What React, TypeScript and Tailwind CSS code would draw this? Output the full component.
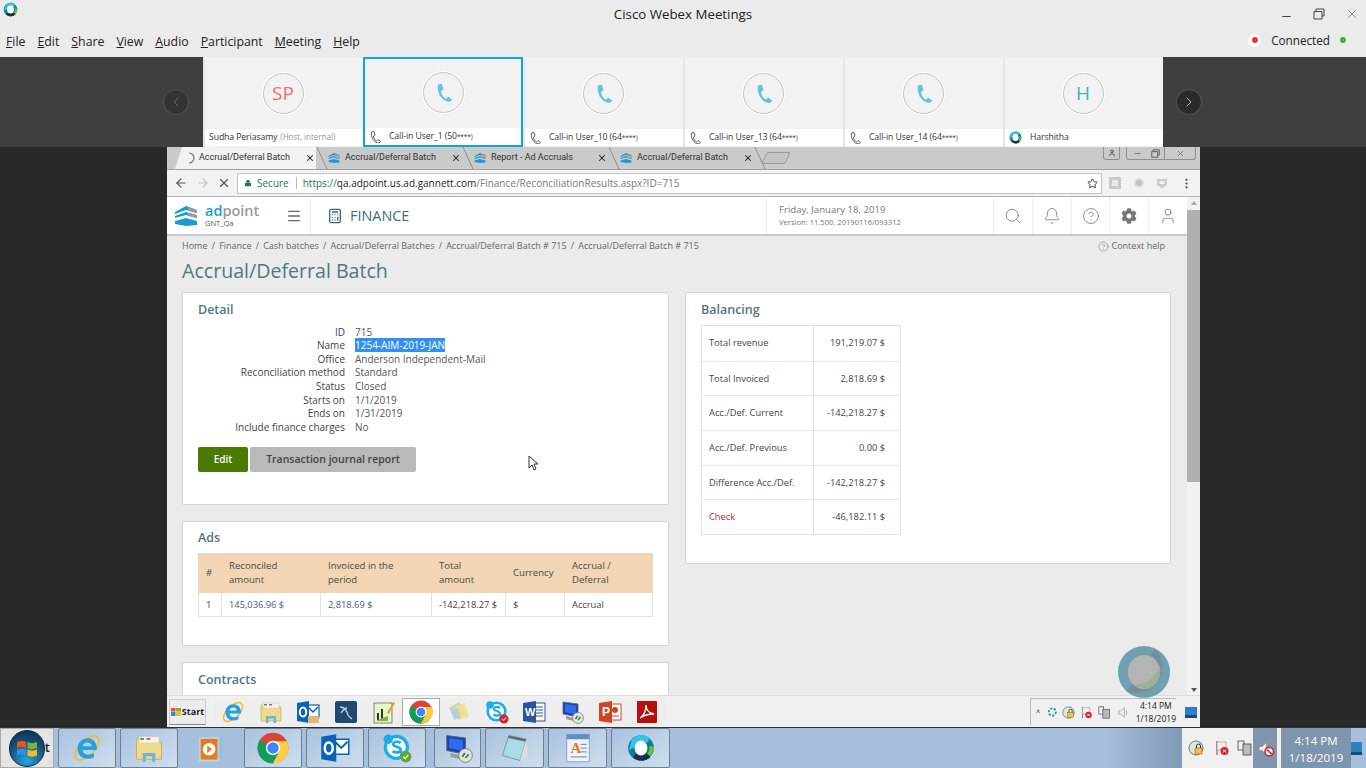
import React from 'react';
import { ArrowLeft, ArrowRight, Bell, Calculator, ChevronLeft, ChevronRight, CircleHelp, EllipsisVertical, Lock, Menu, Minus, Search, Star, User, X } from 'lucide-react';
import { FaCog } from 'react-icons/fa';

const handset = 'M5 2 10 1l2 7-3 2c0 4 3 8 6 10l3-3 5 4-3 3C10 24 3 12 5 2z';

const PhoneGlyph: React.FC<{ size?: number; outline?: boolean }> = ({ size = 18, outline }) => (
    <svg width={size} height={size} viewBox="0 0 24 24" className="shrink-0">
        <path d={handset} fill={outline ? 'none' : '#62c0ec'} stroke={outline ? '#333' : 'none'} strokeWidth={outline ? 1.6 : 0} />
    </svg>
);

const WebexLogo: React.FC<{ size?: number }> = ({ size = 16 }) => (
    <svg width={size} height={size} viewBox="0 0 24 24">
        <circle cx="12" cy="12" r="11" fill="#0a7d9c" />
        <path d="M4 5a11 11 0 0 1 15-2l-1 5a7 7 0 0 0-11 3L1.500 14z" fill="#35c3e8" />
        <path d="M5 20a11 11 0 0 0 15 0l-3-4a7 7 0 0 1-9 0z" fill="#14344a" />
        <path d="M20 19a11 11 0 0 0 3-8l-4-1a7 7 0 0 1-2 7z" fill="#76bd3a" />
        <ellipse cx="12" cy="12" rx="5.500" ry="6.500" fill="#fff" />
    </svg>
);

const AdpointLogo: React.FC<{ size?: number }> = ({ size = 16 }) => (
    <svg width={size} height={size} viewBox="0 0 24 24">
        <path d="M1 8 12 2l11 4v3L12 6 1 10z" fill="#1d9ad6" />
        <path d="M1 12 12 8l11 3v3l-11-3-11 3z" fill="#1d9ad6" />
        <path d="M1 17l11-3 11 3v4l-11 1-11-2z" fill="#1d9ad6" />
        <path d="M14 3l9 3v3l-9-2zM14 9l9 2v3l-9-2z" fill="#9a9a9a" />
    </svg>
);

const ChromeIcon: React.FC<{ size?: number }> = ({ size = 24 }) => (
    <svg width={size} height={size} viewBox="0 0 24 24">
        <circle cx="12" cy="12" r="11.500" fill="#db4437" />
        <path d="M12 12 2 6.200A11.500 11.500 0 0 0 12 23.500l5.500-10z" fill="#0f9d58" />
        <path d="M12 7h10.400A11.500 11.500 0 0 1 12 23.500L17 14z" fill="#ffcd40" />
        <circle cx="12" cy="12" r="5.400" fill="#fff" />
        <circle cx="12" cy="12" r="4.300" fill="#4285f4" />
    </svg>
);

const IeIcon: React.FC<{ size?: number }> = ({ size = 24 }) => (
    <svg width={size} height={size} viewBox="0 0 24 24">
        <ellipse cx="12" cy="12" rx="12" ry="6" transform="rotate(-45 12 12)" fill="none" stroke="#f2bc2c" strokeWidth="1.400" />
        <path d="M20 13.500H8.500c.3 4 5.500 5 9 2.200v3.600c-6 3-13 .4-13-7 0-7 7-10 12-7 2.400 1.400 3.500 4.500 3.500 8.200zM8.600 10.500h7.200c0-4-7-4-7.200 0z" fill="#2a9fe0" fillRule="evenodd" />
    </svg>
);

const FolderIcon: React.FC<{ size?: number }> = ({ size = 24 }) => (
    <svg width={size} height={size} viewBox="0 0 24 24">
        <path d="M2 5h7l1.500 2H22v14H2z" fill="#f0d98c" stroke="#c9a94f" strokeWidth=".7" />
        <rect x="4" y="3" width="16" height="5" fill="#f8f4e4" stroke="#c8c8c8" strokeWidth=".5" />
        <rect x="5" y="4" width="3" height="1.500" fill="#3aa655" />
        <rect x="10" y="4" width="3" height="1.500" fill="#d9534f" />
        <path d="M7 23v-7h10v7h-2.500v-4.500h-5V23z" fill="#66b7de" />
    </svg>
);

const OutlookIcon: React.FC<{ size?: number; mail?: boolean }> = ({ size = 24, mail }) => (
    <svg width={size} height={size} viewBox="0 0 24 24">
        <rect x="11" y="5" width="12" height="12" fill="#fff" stroke="#0a64b5" strokeWidth="1.200" />
        <path d="M12 7l5 5 5-5" fill="none" stroke="#0a64b5" strokeWidth="1.500" />
        <path d="M1 3l12-2v22L1 21z" fill="#0a64b5" />
        <ellipse cx="7" cy="12" rx="3.200" ry="4.500" fill="none" stroke="#fff" strokeWidth="2" />
        {mail && <path d="M12 16h11v7H12z" fill="#e9b27a" />}
    </svg>
);

const SkypeIcon: React.FC<{ size?: number; badge: string }> = ({ size = 24, badge }) => (
    <svg width={size} height={size} viewBox="0 0 24 24">
        <circle cx="11.500" cy="11.500" r="8.800" fill="#fff" stroke="#19aee8" strokeWidth="2.600" />
        <circle cx="5" cy="5" r="3.800" fill="#19aee8" />
        <circle cx="18" cy="18" r="3.800" fill="#19aee8" />
        <path d="M15 8c-2-1.500-6-1.500-6 1 0 2.500 6 1.500 6 4.500 0 2.500-4.500 2.500-6.500 1" fill="none" stroke="#19aee8" strokeWidth="2.200" />
        <circle cx="19" cy="19" r="4.500" fill={badge} />
        <path d="M17 19l1.500 1.500 2.500-3" fill="none" stroke="#fff" strokeWidth="1" />
    </svg>
);

const RemoteIcon: React.FC<{ size?: number }> = ({ size = 24 }) => (
    <svg width={size} height={size} viewBox="0 0 24 24">
        <path d="M3 2l15 2v13L3 14z" fill="#1843b8" stroke="#666" strokeWidth=".8" />
        <path d="M5 4l11 1.500v9L5 12z" fill="#2f6bf0" />
        <path d="M6 16l8 2v3l-8-2z" fill="#999" />
        <circle cx="18" cy="18" r="5.500" fill="#e3e3e3" stroke="#777" strokeWidth=".7" />
        <path d="M15.500 19l2-3M18 20l2.500-3" stroke="#2a8a3e" strokeWidth="1.500" />
    </svg>
);

const NotepadIcon: React.FC<{ size?: number }> = ({ size = 24 }) => (
    <svg width={size} height={size} viewBox="0 0 24 24">
        <path d="M7 2l14 3-5 17-14-4z" fill="#a9dcea" stroke="#6d8f9b" strokeWidth=".7" />
        <path d="M7 2l14 3-.5 2L6.500 4z" fill="#606f78" />
        <path d="M16 22l5-17 1 15z" fill="#dcdcdc" />
    </svg>
);

const AccessIcon: React.FC<{ size?: number }> = ({ size = 24 }) => (
    <svg width={size} height={size} viewBox="0 0 24 24">
        <rect x="3" y="1" width="18" height="22" fill="#eef4fb" stroke="#7d9cc0" strokeWidth=".7" />
        <rect x="3" y="1" width="18" height="4" fill="#5f8fc5" />
        <text x="6" y="16" fontSize="12" fontWeight="700" fill="#e8791c" fontFamily="'Liberation Serif', serif">A</text>
        <path d="M14 9h5M14 12h5M14 15h5M6 19h13" stroke="#7d9cc0" strokeWidth="1" />
    </svg>
);

const MediaIcon: React.FC<{ size?: number }> = ({ size = 24 }) => (
    <svg width={size} height={size} viewBox="0 0 24 24">
        <rect x="6" y="3" width="15" height="18" fill="#8fbfe0" />
        <rect x="3" y="4" width="15" height="18" fill="#e97a1f" stroke="#b7d4ea" strokeWidth="1.500" />
        <circle cx="10.500" cy="13" r="5" fill="#fff" />
        <path d="M9 10l4 3-4 3z" fill="#e97a1f" />
    </svg>
);

const SqlIcon: React.FC<{ size?: number }> = ({ size = 24 }) => (
    <svg width={size} height={size} viewBox="0 0 24 24">
        <rect x="1" y="1" width="22" height="22" rx="2" fill="#1f4a6e" />
        <path d="M6 7c5 0 7 4 8 8 1 2 3 3 4 4M7 13c2-3 4-5 6-5" fill="none" stroke="#b9d2e3" strokeWidth="1.300" />
    </svg>
);

const ChartNoteIcon: React.FC<{ size?: number }> = ({ size = 24 }) => (
    <svg width={size} height={size} viewBox="0 0 24 24">
        <rect x="2" y="3" width="18" height="20" fill="#e9f3c9" stroke="#555" strokeWidth=".7" />
        <rect x="5" y="13" width="2" height="7" fill="#333" />
        <rect x="9" y="9" width="2" height="11" fill="#333" />
        <path d="M5 20l11-4v5H5z" fill="#7cb832" />
        <path d="M15 13l6-11 2 1-6 11z" fill="#e0a526" />
    </svg>
);

const NotesIcon: React.FC<{ size?: number }> = ({ size = 24 }) => (
    <svg width={size} height={size} viewBox="0 0 24 24">
        <path d="M2 8l10-6 6 11-10 6z" fill="#bcd9b6" />
        <path d="M8 6l10-3 4 14-11 3z" fill="#f3df8b" opacity=".9" />
        <path d="M4 11l7-3 3 10-7 2z" fill="#a8cfe2" opacity=".75" />
    </svg>
);

const WordIcon: React.FC<{ size?: number }> = ({ size = 24 }) => (
    <svg width={size} height={size} viewBox="0 0 24 24">
        <rect x="11" y="3" width="12" height="18" fill="#fff" stroke="#2b579a" strokeWidth="1" />
        <path d="M14 7h7M14 10h7M14 13h7M14 16h7" stroke="#2b579a" strokeWidth="1" />
        <path d="M1 3l13-2v22L1 21z" fill="#2b579a" />
        <text x="3" y="16" fontSize="11" fontWeight="700" fill="#fff" fontFamily="'Liberation Sans', sans-serif">W</text>
    </svg>
);

const PowerPointIcon: React.FC<{ size?: number }> = ({ size = 24 }) => (
    <svg width={size} height={size} viewBox="0 0 24 24">
        <rect x="11" y="4" width="12" height="16" fill="#fff" stroke="#d04423" strokeWidth="1" />
        <circle cx="17" cy="10" r="3" fill="#d04423" />
        <path d="M14 16h7" stroke="#d04423" strokeWidth="1" />
        <path d="M1 3l13-2v22L1 21z" fill="#d04423" />
        <text x="4" y="16" fontSize="12" fontWeight="700" fill="#fff" fontFamily="'Liberation Sans', sans-serif">P</text>
    </svg>
);

const AcrobatIcon: React.FC<{ size?: number }> = ({ size = 24 }) => (
    <svg width={size} height={size} viewBox="0 0 24 24">
        <rect x="2" y="1" width="20" height="22" rx="1" fill="#b3100f" />
        <path d="M5 18c4-2 6-8 6-13 0 5 3 8 8 9-5 0-10 1-14 4z" fill="none" stroke="#fff" strokeWidth="1.300" />
    </svg>
);

const TrayLock: React.FC<{ size?: number }> = ({ size = 16 }) => (
    <svg width={size} height={size} viewBox="0 0 16 16">
        <circle cx="8" cy="8" r="7" fill="#dfe7e2" stroke="#5f7f6a" strokeWidth="1" />
        <rect x="7" y="8" width="7" height="6" fill="#f4c430" stroke="#555" strokeWidth=".5" />
        <path d="M8.500 8V6a2 2 0 0 1 4 0v2" fill="none" stroke="#333" strokeWidth="1" />
    </svg>
);

const TrayFlag: React.FC<{ size?: number }> = ({ size = 16 }) => (
    <svg width={size} height={size} viewBox="0 0 16 16">
        <path d="M3 1v14" stroke="#555" strokeWidth="1" />
        <path d="M3 2h9v8H3z" fill="#eee" stroke="#888" strokeWidth=".6" />
        <circle cx="10.500" cy="11" r="4" fill="#d9252a" />
        <path d="M9 9.500l3 3M12 9.500l-3 3" stroke="#fff" strokeWidth="1" />
    </svg>
);

const TrayNet: React.FC<{ size?: number }> = ({ size = 16 }) => (
    <svg width={size} height={size} viewBox="0 0 16 16">
        <rect x="1" y="1" width="6" height="9" fill="#eee" stroke="#444" strokeWidth=".8" />
        <rect x="6" y="4" width="8" height="11" fill="#bbb" stroke="#444" strokeWidth=".8" />
    </svg>
);

const TraySpeaker: React.FC<{ size?: number; muted?: boolean }> = ({ size = 16, muted }) => (
    <svg width={size} height={size} viewBox="0 0 16 16">
        <path d="M2 6h3l4-4v12l-4-4H2z" fill="#eee" stroke="#888" strokeWidth=".7" />
        {muted ? (
            <>
                <circle cx="11.500" cy="11" r="4" fill="#fff" stroke="#d9252a" strokeWidth="1.500" />
                <path d="M9 9l5 4" stroke="#d9252a" strokeWidth="1.500" />
            </>
        ) : (
            <path d="M11 5c1.500 2 1.500 4 0 6" fill="none" stroke="#999" strokeWidth="1" />
        )}
    </svg>
);

const menuItems = [
    ['F', 'ile'],
    ['E', 'dit'],
    ['S', 'hare'],
    ['V', 'iew'],
    ['A', 'udio'],
    ['P', 'articipant'],
    ['M', 'eeting'],
    ['H', 'elp'],
];

const WebexBar: React.FC = () => (
    <div className="h-[57px] bg-[#ebebeb] shrink-0 flex flex-col text-[#222]">
        <div className="h-[28px] flex items-center">
            <div className="w-[90px] pl-[3px] pb-[10px]"><WebexLogo size={15} /></div>
            <div className="flex-1 text-center text-[13.300px] pt-[1px]">Cisco Webex Meetings</div>
            <div className="w-[90px] flex items-center justify-end gap-[20px] pr-[7px] text-[#444]">
                <Minus size={13} className="mt-[4px]" />
                <svg width="12" height="12" viewBox="0 0 12 12" fill="none" stroke="#444" strokeWidth="1"><path d="M3 3V1h8v7H9M1 3.500h8V11H1z" /></svg>
                <X size={14} strokeWidth={1} />
            </div>
        </div>
        <div className="h-[29px] flex items-center">
            <div className="flex gap-[12px] pl-[6px] text-[12.300px]">
                {menuItems.map(([k, rest]) => (
                    <span key={k}><span className="underline">{k}</span>{rest}</span>
                ))}
            </div>
            <div className="ml-auto flex items-center pr-[20px] pb-[4px] text-[11.700px]">
                <span className="w-[13px] h-[13px] rounded-full bg-white flex items-center justify-center">
                    <span className="w-[6px] h-[6px] rounded-full bg-[#ef3a34]" />
                </span>
                <span className="ml-[10px]">Connected</span>
                <span className="ml-[10px] w-[6px] h-[6px] rounded-full bg-[#3fae49]" />
            </div>
        </div>
    </div>
);

type Participant = { name: string; masked?: string; note?: string; kind: 'phone' | 'host' | 'webex'; initials?: string; selected?: boolean };

const participants: Participant[] = [
    { name: 'Sudha Periasamy', note: '(Host, internal)', kind: 'host', initials: 'SP' },
    { name: 'Call-in User_1 (50', masked: '****)', kind: 'phone', selected: true },
    { name: 'Call-in User_10 (64', masked: '****)', kind: 'phone' },
    { name: 'Call-in User_13 (64', masked: '****)', kind: 'phone' },
    { name: 'Call-in User_14 (64', masked: '****)', kind: 'phone' },
    { name: 'Harshitha', kind: 'webex', initials: 'H' },
];

const ParticipantTile: React.FC<{ p: Participant }> = ({ p }) => (
    <div className={`w-[160px] h-[90px] flex flex-col bg-[#f2f2f2] ${p.selected ? 'border-2 border-[#0ea5dc]' : 'border-l-2 border-[#e6e6e6]'}`}>
        <div className={`flex-1 flex items-center justify-center ${p.selected ? 'pb-[3px]' : 'pr-[2px]'}`}>
            <div className="w-[41px] h-[41px] rounded-full border border-[#c4c4c4] bg-[#f2f2f2] shadow-[0_0_0_1px_#ffffff] flex items-center justify-center">
                {p.kind === 'phone' && <PhoneGlyph size={19} />}
                {p.kind === 'host' && <span className="text-[19px] text-[#f36f64]">{p.initials}</span>}
                {p.kind === 'webex' && <span className="text-[19px] text-[#3eb6a6]">{p.initials}</span>}
            </div>
        </div>
        <div className={`h-[17px] bg-white flex items-center text-[8.700px] tracking-[-0.1px] text-[#333] whitespace-nowrap ${p.selected ? 'pl-[4px]' : 'pl-[4px] mb-[1px]'}`}>
            {p.kind === 'phone' && <span className="mr-[8px]"><PhoneGlyph size={12} outline /></span>}
            {p.kind === 'webex' && <span className="mr-[8px] shrink-0"><WebexLogo size={13} /></span>}
            <span>{p.name}</span>
            {p.masked && <span className="text-[6.500px]">{p.masked}</span>}
            {p.note && <span className="ml-[3px] text-[8.200px] text-[#999]">{p.note}</span>}
        </div>
    </div>
);

const ParticipantStrip: React.FC = () => (
    <div className="h-[90px] bg-[#3f3f3f] shrink-0 flex">
        <div className="w-[203px] flex items-center justify-end pr-[14px]">
            <div className="w-[26px] h-[26px] rounded-full bg-[#333] border border-[#555] flex items-center justify-center">
                <ChevronLeft size={16} strokeWidth={1} className="text-[#888]" />
            </div>
        </div>
        {participants.map((p) => <ParticipantTile key={p.name} p={p} />)}
        <div className="flex-1 flex items-center pl-[13px]">
            <div className="w-[26px] h-[26px] rounded-full bg-[#2a2a2a] border border-[#555] flex items-center justify-center">
                <ChevronRight size={16} strokeWidth={1} className="text-white" />
            </div>
        </div>
    </div>
);

const tabs = ['Accrual/Deferral Batch', 'Report - Ad Accruals', 'Accrual/Deferral Batch'];

const TabSlant: React.FC = () => (
    <svg width="12" height="22" viewBox="0 0 12 22" className="shrink-0" fill="none" stroke="#8f8f8f"><path d="M1 0l10 22" /></svg>
);

const TabStrip: React.FC = () => (
    <div className="h-[23px] bg-[#c9caca] flex items-end text-[9px] text-[#333] font-['Roboto',sans-serif] border-b border-[#a0a0a0] shrink-0 pl-[8px]">
        <div className="w-[141px] h-[22px] bg-[#f2f2f2] flex items-center pl-[11px] pr-[1px] [clip-path:polygon(0_100%,7px_0,100%_0,100%_100%)]">
            <svg width="10" height="12" viewBox="0 0 10 12" fill="none" stroke="#777" strokeWidth="1.200" className="shrink-0"><path d="M3 1a5 5 0 0 1 0 10" /></svg>
            <span className="ml-[3px] flex-1 whitespace-nowrap">Accrual/Deferral Batch</span>
            <X size={10} strokeWidth={2.500} className="text-[#222]" />
        </div>
        <TabSlant />
        {tabs.map((t, i) => (
            <React.Fragment key={i}>
                <div className="w-[134px] h-[22px] flex items-center pr-[1px]">
                    <AdpointLogo size={12} />
                    <span className="ml-[5px] flex-1 whitespace-nowrap">{t}</span>
                    <X size={10} strokeWidth={2.500} className="text-[#222]" />
                </div>
                <TabSlant />
            </React.Fragment>
        ))}
        <div className="w-[24px] h-[12px] mb-[5px] -ml-[2px] border border-[#999] bg-[#c4c5c5] -skew-x-[25deg] rounded-[2px]" />
        <div className="ml-auto self-start flex items-start pr-[4px]">
            <div className="w-[17px] h-[13px] border border-t-0 border-[#8f8f8f] rounded-b-[3px] flex items-center justify-center"><User size={8} /></div>
            <div className="ml-[6px] w-[70px] h-[13px] border border-t-0 border-[#8f8f8f] rounded-b-[3px] flex items-center text-[#666]">
                <div className="w-[20px] flex justify-center"><Minus size={9} /></div>
                <div className="w-[18px] flex justify-center border-r border-[#8f8f8f] h-full items-center">
                    <svg width="9" height="9" viewBox="0 0 12 12" fill="none" stroke="#555" strokeWidth="1.200"><path d="M3 3V1h8v7H9M1 3.500h8V11H1z" /></svg>
                </div>
                <div className="flex-1 flex justify-center"><X size={9} /></div>
            </div>
        </div>
    </div>
);

const AddressBar: React.FC = () => (
    <div className="h-[27px] bg-[#f2f2f2] flex items-center shrink-0 border-b border-[#b5b5b5] pl-[7px]">
        <ArrowLeft size={14} className="text-[#555]" />
        <ArrowRight size={14} className="text-[#c4c4c4] ml-[8px]" />
        <X size={14} className="text-[#555] ml-[7px]" />
        <div className="ml-[6px] w-[865px] h-[21px] bg-white border border-[#c4c4c4] flex items-center pl-[6px] text-[10px] whitespace-nowrap">
            <Lock size={8} strokeWidth={0} fill="#188038" />
            <span className="ml-[5px] text-[#188038]">Secure</span>
            <span className="ml-[7px] w-px h-[12px] bg-[#bbb]" />
            <span className="ml-[6px] text-[#188038]">https://</span>
            <span className="text-[#222]">qa.adpoint.us.ad.gannett.com</span>
            <span className="text-[#777]">/Finance/ReconciliationResults.aspx?ID=715</span>
            <Star size={11} className="ml-auto mr-[3px] text-[#333]" />
        </div>
        <div className="ml-[7px] w-[12px] h-[12px] bg-[#c9c9c9] flex items-center justify-center">
            <span className="w-[6px] h-[6px] bg-white opacity-60" />
        </div>
        <div className="ml-[13px] w-[10px] h-[10px] rounded-full bg-[#c0c0c0] border-2 border-[#dcdcdc]" />
        <svg width="12" height="12" viewBox="0 0 12 12" className="ml-[12px]"><path d="M1 1l2.500 1h5L11 1v7l-5 3.500L1 8z" fill="#c8cdd0" /><path d="M3.500 4h5v3h-5z" fill="#f2f2f2" /></svg>
        <EllipsisVertical size={13} className="ml-[12px] text-[#444]" />
    </div>
);

const headerIcons = [Search, Bell, CircleHelp, FaCog, User];

const AppHeader: React.FC = () => (
    <div className="h-[39px] bg-white flex border-b-2 border-[#c8c8c8] shrink-0">
        <div className="w-[144px] flex items-center pl-[7px] border-r border-[#efefef]">
            <AdpointLogo size={24} />
            <div className="ml-[7px] flex flex-col">
                <div className="text-[14.500px] leading-[15px] font-semibold">
                    <span className="text-[#1d9ad6]">ad</span><span className="text-[#9a9a9a]">point</span>
                </div>
                <div className="text-[7.500px] leading-[10px] text-[#555]">GNT_Qa</div>
            </div>
            <Menu size={16} className="ml-[27px] text-[#666]" />
        </div>
        <div className="flex items-center pl-[16px] text-[#3d6d73]">
            <Calculator size={16} strokeWidth={2} />
            <span className="ml-[7px] text-[14.400px]">FINANCE</span>
        </div>
        <div className="ml-auto w-[227px] flex flex-col justify-center pl-[12px] border-l border-[#efefef]">
            <div className="text-[9.600px] leading-[13px] text-[#777]">Friday, January 18, 2019</div>
            <div className="text-[7.600px] leading-[12px] text-[#777]">Version: 11.500. 20190116/093312</div>
        </div>
        {headerIcons.map((Icon, i) => (
            <div key={i} className="w-[38.800px] flex items-center justify-center border-l border-[#efefef] text-[#777]">
                {i === 3 ? <Icon size={16} /> : <Icon size={18} strokeWidth={1.100} />}
            </div>
        ))}
    </div>
);

const crumbs = ['Home', 'Finance', 'Cash batches', 'Accrual/Deferral Batches', 'Accrual/Deferral Batch # 715', 'Accrual/Deferral Batch # 715'];

const detailRows = [
    ['ID', '715'],
    ['Name', '1254-AIM-2019-JAN'],
    ['Office', 'Anderson Independent-Mail'],
    ['Reconciliation method', 'Standard'],
    ['Status', 'Closed'],
    ['Starts on', '1/1/2019'],
    ['Ends on', '1/31/2019'],
    ['Include finance charges', 'No'],
];

const balanceRows = [
    ['Total revenue', '191,219.07 $'],
    ['Total Invoiced', '2,818.69 $'],
    ['Acc./Def. Current', '-142,218.27 $'],
    ['Acc./Def. Previous', '0.00 $'],
    ['Difference Acc./Def.', '-142,218.27 $'],
    ['Check', '-46,182.11 $'],
];

const Card: React.FC<{ title: string; className: string; titleClass?: string; children?: React.ReactNode }> = ({ title, className, titleClass = 'pt-[8px]', children }) => (
    <div className={`bg-white border border-[#d4d4d4] rounded-[2px] px-[15px] shrink-0 overflow-hidden ${className}`}>
        <h3 className={`text-[12.500px] leading-[17px] font-semibold text-[#52767c] ${titleClass}`}>{title}</h3>
        {children}
    </div>
);

const DetailCard: React.FC = () => (
    <Card title="Detail" className="h-[213px]">
        <div className="mt-[7.500px] grid grid-cols-[147px_1fr] gap-x-[10px] text-[10px] leading-[13.650px] text-[#444]">
            {detailRows.map(([label, value]) => (
                <React.Fragment key={label}>
                    <div className="text-right whitespace-nowrap">{label}</div>
                    <div className="text-[#555] whitespace-nowrap">
                        {label === 'Name' ? <span className="bg-[#3390f0] text-white">{value}</span> : value}
                    </div>
                </React.Fragment>
            ))}
        </div>
        <div className="mt-[12.500px] flex gap-[2px]">
            <button className="w-[50px] h-[25px] rounded-[2px] bg-[#4a7a04] text-white text-[10px] font-semibold">Edit</button>
            <button className="w-[166px] h-[25px] rounded-[2px] bg-[#b9b9b9] text-[#444] text-[10.500px] font-semibold">Transaction journal report</button>
        </div>
    </Card>
);

const AdsCard: React.FC = () => (
    <Card title="Ads" className="h-[125px]" titleClass="pt-[7px]">
        <div className="mt-[7px] w-[455px] text-[9.300px] text-[#444]">
            <div className="grid grid-cols-[23px_99px_111px_74px_59px_89px] h-[40px] bg-[#f1d5b5] font-medium text-[9.600px] leading-[13.600px] items-center text-[#4a4a4a]">
                <div className="pl-[8px]">#</div>
                <div className="pl-[8px]">Reconciled<br />amount</div>
                <div className="pl-[8px]">Invoiced in the<br />period</div>
                <div className="pl-[8px]">Total<br />amount</div>
                <div className="pl-[8px]">Currency</div>
                <div className="pl-[8px]">Accrual /<br />Deferral</div>
            </div>
            <div className="grid grid-cols-[23px_99px_111px_74px_59px_89px] h-[24px] items-center border-x border-b border-[#e2e2e2] [&>div]:h-full [&>div]:flex [&>div]:items-center [&>div]:pl-[7px] [&>div]:border-r [&>div]:border-[#e2e2e2] whitespace-nowrap">
                <div>1</div>
                <div className="text-[#3e5c8a]">145,036.96 $</div>
                <div className="text-[#3e5c8a]">2,818.69 $</div>
                <div>-142,218.27 $</div>
                <div>$</div>
                <div className="!border-r-0">Accrual</div>
            </div>
        </div>
    </Card>
);

const BalancingCard: React.FC = () => (
    <Card title="Balancing" className="h-[272px] w-[486px]">
        <div className="mt-[7px] w-[200px] border border-[#e2e2e2] text-[9.300px] text-[#444]">
            {balanceRows.map(([label, value], i) => (
                <div key={label} className={`grid grid-cols-[112px_1fr] h-[34.700px] items-center ${i ? 'border-t border-[#e6e6e6]' : ''}`}>
                    <div className={`pl-[7px] h-full flex items-center border-r border-[#e2e2e2] whitespace-nowrap ${label === 'Check' ? 'text-[#c8232c]' : ''}`}>{label}</div>
                    <div className="text-right pr-[15px]">{value}</div>
                </div>
            ))}
        </div>
    </Card>
);

const Page: React.FC = () => (
    <div className="flex-1 min-h-0 bg-[#ebebeb] overflow-hidden px-[15px]">
        <div className="flex items-center justify-between h-[20px] text-[9px] text-[#666] pr-[7px]">
            <div className="flex items-center whitespace-nowrap">
                {crumbs.map((c, i) => (
                    <span key={i}>{i > 0 && <span className="mx-[4.200px]">/</span>}{c}</span>
                ))}
            </div>
            <div className="flex items-center gap-[3px]"><CircleHelp size={11} strokeWidth={1} /><span>Context help</span></div>
        </div>
        <h1 className="text-[19.600px] leading-[28px] text-[#4f7a7f] mt-[1px]">Accrual/Deferral Batch</h1>
        <div className="mt-[7px] flex gap-[16px] items-start">
            <div className="w-[487px] flex flex-col gap-[16px]">
                <DetailCard />
                <AdsCard />
                <Card title="Contracts" className="h-[60px]" />
            </div>
            <BalancingCard />
        </div>
    </div>
);

const quickIcons = [
    <IeIcon size={24} />, <FolderIcon size={24} />, <OutlookIcon size={24} mail />, <SqlIcon size={24} />, <ChartNoteIcon size={24} />,
    <ChromeIcon size={24} />, <NotesIcon size={24} />, <SkypeIcon size={24} badge="#d9252a" />, <WordIcon size={24} />,
    <RemoteIcon size={24} />, <PowerPointIcon size={24} />, <AcrobatIcon size={24} />,
];

const InnerTaskbar: React.FC = () => (
    <div className="h-[32px] bg-[#f0f0f0] border-t border-[#ddd] flex items-center shrink-0 pl-[2px]">
        <div className="w-[37px] h-[26px] bg-[#ececec] border border-[#cfcfcf] border-b-[#888] flex items-center justify-center gap-[1px] text-[9px] font-bold text-[#222]">
            <svg width="10" height="10" viewBox="0 0 10 10"><path d="M0 1h4.500v3.500H0z" fill="#e8541e" /><path d="M5 1h5v3.500H5z" fill="#7db62e" /><path d="M0 5h4.500v4H0z" fill="#2d8fe0" /><path d="M5 5h5v4H5z" fill="#f5bd1f" /></svg>
            Start
        </div>
        <div className="flex ml-[8px]">
            {quickIcons.map((icon, i) => (
                <div key={i} className={`w-[37.700px] h-[28px] flex items-center justify-center ${i === 5 ? 'bg-white border border-[#aaa]' : 'bg-[#eeeeee]'}`}>{icon}</div>
            ))}
        </div>
        <div className="ml-auto h-[27px] w-[146px] border-l border-t border-[#bcbcbc] flex items-center pl-[5px] mr-[24px] relative">
            <span className="text-[7px] text-[#222]">&#708;</span>
            <svg width="12" height="14" viewBox="0 0 12 14" className="ml-[8px]"><circle cx="6" cy="7" r="5" fill="none" stroke="#1f9c8e" strokeWidth="2.500" strokeDasharray="3 2" /></svg>
            <span className="ml-[5px]"><TrayLock size={13} /></span>
            <span className="ml-[5px]"><TrayFlag size={13} /></span>
            <span className="ml-[5px]"><TrayNet size={13} /></span>
            <span className="ml-[6px]"><TraySpeaker size={13} /></span>
            <div className="ml-[6px] text-[8.500px] leading-[13px] text-center text-[#222] whitespace-nowrap">4:14 PM<br />1/18/2019</div>
            <div className="absolute -right-[21px] top-[8px] w-[12px] h-[11px] bg-[#2f7fc4] border-b-[3px] border-[#124d7f]" />
        </div>
    </div>
);

const bottomApps = [
    { icon: <IeIcon size={30} />, box: true },
    { icon: <FolderIcon size={30} />, box: true },
    { icon: <MediaIcon size={30} />, box: false },
    { icon: <ChromeIcon size={32} />, box: true },
    { icon: <OutlookIcon size={30} />, box: true },
    { icon: <SkypeIcon size={30} badge="#5fa82c" />, box: true },
];

const bottomApps2 = [
    { icon: <RemoteIcon size={30} />, w: 'w-[47px]' },
    { icon: <NotepadIcon size={30} />, w: 'w-[59px]' },
    { icon: <AccessIcon size={30} />, w: 'w-[59px]' },
    { icon: <WebexLogo size={28} />, w: 'w-[59px]' },
];

const taskButton = 'bg-gradient-to-br from-[#a9c2de] to-[#cfdeee] border border-[#6f7f92] rounded-[2px]';

const WindowsTaskbar: React.FC = () => (
    <div className="h-[41px] bg-[#a6bfdb] flex shrink-0 border-t border-[#2b2f33]">
        <div className="w-[54px] h-full bg-[#e4e4e4] relative flex items-center justify-end pr-[3px] text-[13px] font-semibold text-[#222] border border-[#aaa]">
            t
            <div className="absolute left-[8px] top-[1px] w-[36px] h-[37px] rounded-full bg-[radial-gradient(circle_at_50%_85%,#2aa2df,#14507e_55%,#0d2a44)] border border-[#0f2a44] flex items-center justify-center">
                <svg width="24" height="22" viewBox="0 0 24 22"><path d="M2 4c3-1.500 6-1.500 9 0v6c-3-1.500-6-1.500-9 0z" fill="#e8541e" /><path d="M12.500 4c3 1.500 6 1.500 9.500 0v6c-3.500 1.500-6.500 1.500-9.500 0z" fill="#7db62e" /><path d="M2 11.500c3-1.500 6-1.500 9 0v6c-3-1.500-6-1.500-9 0z" fill="#2d8fe0" /><path d="M12.500 11.500c3 1.500 6 1.500 9.500 0v6c-3.500 1.500-6.500 1.500-9.500 0z" fill="#f5bd1f" /></svg>
            </div>
        </div>
        <div className="flex gap-[4px] pl-[4px]">
            {bottomApps.map((a, i) => (
                <div key={i} className={`w-[58px] h-full flex items-center justify-center ${a.box ? taskButton : ''}`}>{a.icon}</div>
            ))}
        </div>
        <div className="flex gap-[4px] pl-[8px]">
            {bottomApps2.map((a, i) => (
                <div key={i} className={`${a.w} h-full flex items-center justify-center ${taskButton}`}>{a.icon}</div>
            ))}
        </div>
        <div className="flex-1 bg-gradient-to-r from-[#a6bfdb] from-[85%] to-[#8099b5]" />
        <div className="w-[71px] h-full bg-[#f0f0f0] flex items-center pl-[6px]">
            <TrayLock size={16} />
            <span className="ml-[10px]"><TrayFlag size={16} /></span>
            <span className="ml-[7px]"><TrayNet size={16} /></span>
        </div>
        <div className="w-[24px] h-full bg-[#7f94ad] flex items-center justify-center"><TraySpeaker size={17} muted /></div>
        <div className="w-[4px] h-full bg-[#f0f0f0]" />
        <div className="w-[70px] h-full bg-[#7f94ad] flex flex-col items-center justify-center pt-[2px] text-[11.500px] leading-[17px] text-white whitespace-nowrap">
            <span>4:14 PM</span>
            <span>1/18/2019</span>
        </div>
        <div className="w-[15px] flex items-center"><div className="w-[11px] h-[13px] bg-[#2f7fc4] border-b-[3px] border-[#124d7f]" /></div>
    </div>
);

const App: React.FC = () => {
    return (
        <div className="w-[1366px] h-[768px] overflow-hidden flex flex-col relative font-['Open_Sans',sans-serif]">
            <WebexBar />
            <ParticipantStrip />
            <div className="flex-1 min-h-0 bg-[#292929] flex justify-center">
                <div className="w-[1033px] ml-[1px] flex flex-col">
                    <div className="flex-1 min-h-0 flex flex-col">
                        <TabStrip />
                        <AddressBar />
                        <div className="flex-1 min-h-0 flex">
                            <div className="flex-1 min-w-0 flex flex-col">
                                <AppHeader />
                                <Page />
                            </div>
                            <div className="w-[13px] bg-[#f1f1f1] flex flex-col items-center pt-[4px]">
                                <span className="w-0 h-0 border-x-[3px] border-x-transparent border-b-[4px] border-b-[#aaa]" />
                                <div className="w-full h-[272px] mt-[5px] bg-[#b0b0b0]" />
                                <span className="mt-auto mb-[3px] w-0 h-0 border-x-[3px] border-x-transparent border-t-[4px] border-t-[#555]" />
                            </div>
                        </div>
                    </div>
                    <InnerTaskbar />
                </div>
            </div>
            <WindowsTaskbar />
            {/* floating webex bubble + mouse pointer */}
            <svg width="52" height="52" viewBox="0 0 52 52" className="absolute left-[1118px] top-[646px]">
                <circle cx="26" cy="26" r="26" fill="#70a1b1" />
                <path d="M37 3A26 26 0 0 1 8 45l6-7c10 8 24 4 27-8 2-8-1-16-8-21z" fill="#748f9b" />
                <ellipse cx="26" cy="26" rx="16" ry="17" fill="#b4b4b4" />
                <path d="M41 18C40 30 30 38 16 39c8 6 20 5 24-5 3-6 3-11 1-16z" fill="#9db295" />
            </svg>
            <svg width="11" height="16" viewBox="0 0 11 16" className="absolute left-[528px] top-[455px]">
                <path d="M1 1v12l3-3 2 5 2-1-2-5h4z" fill="#fff" stroke="#333" strokeWidth="1" />
            </svg>
        </div>
    );
};

export default App;
